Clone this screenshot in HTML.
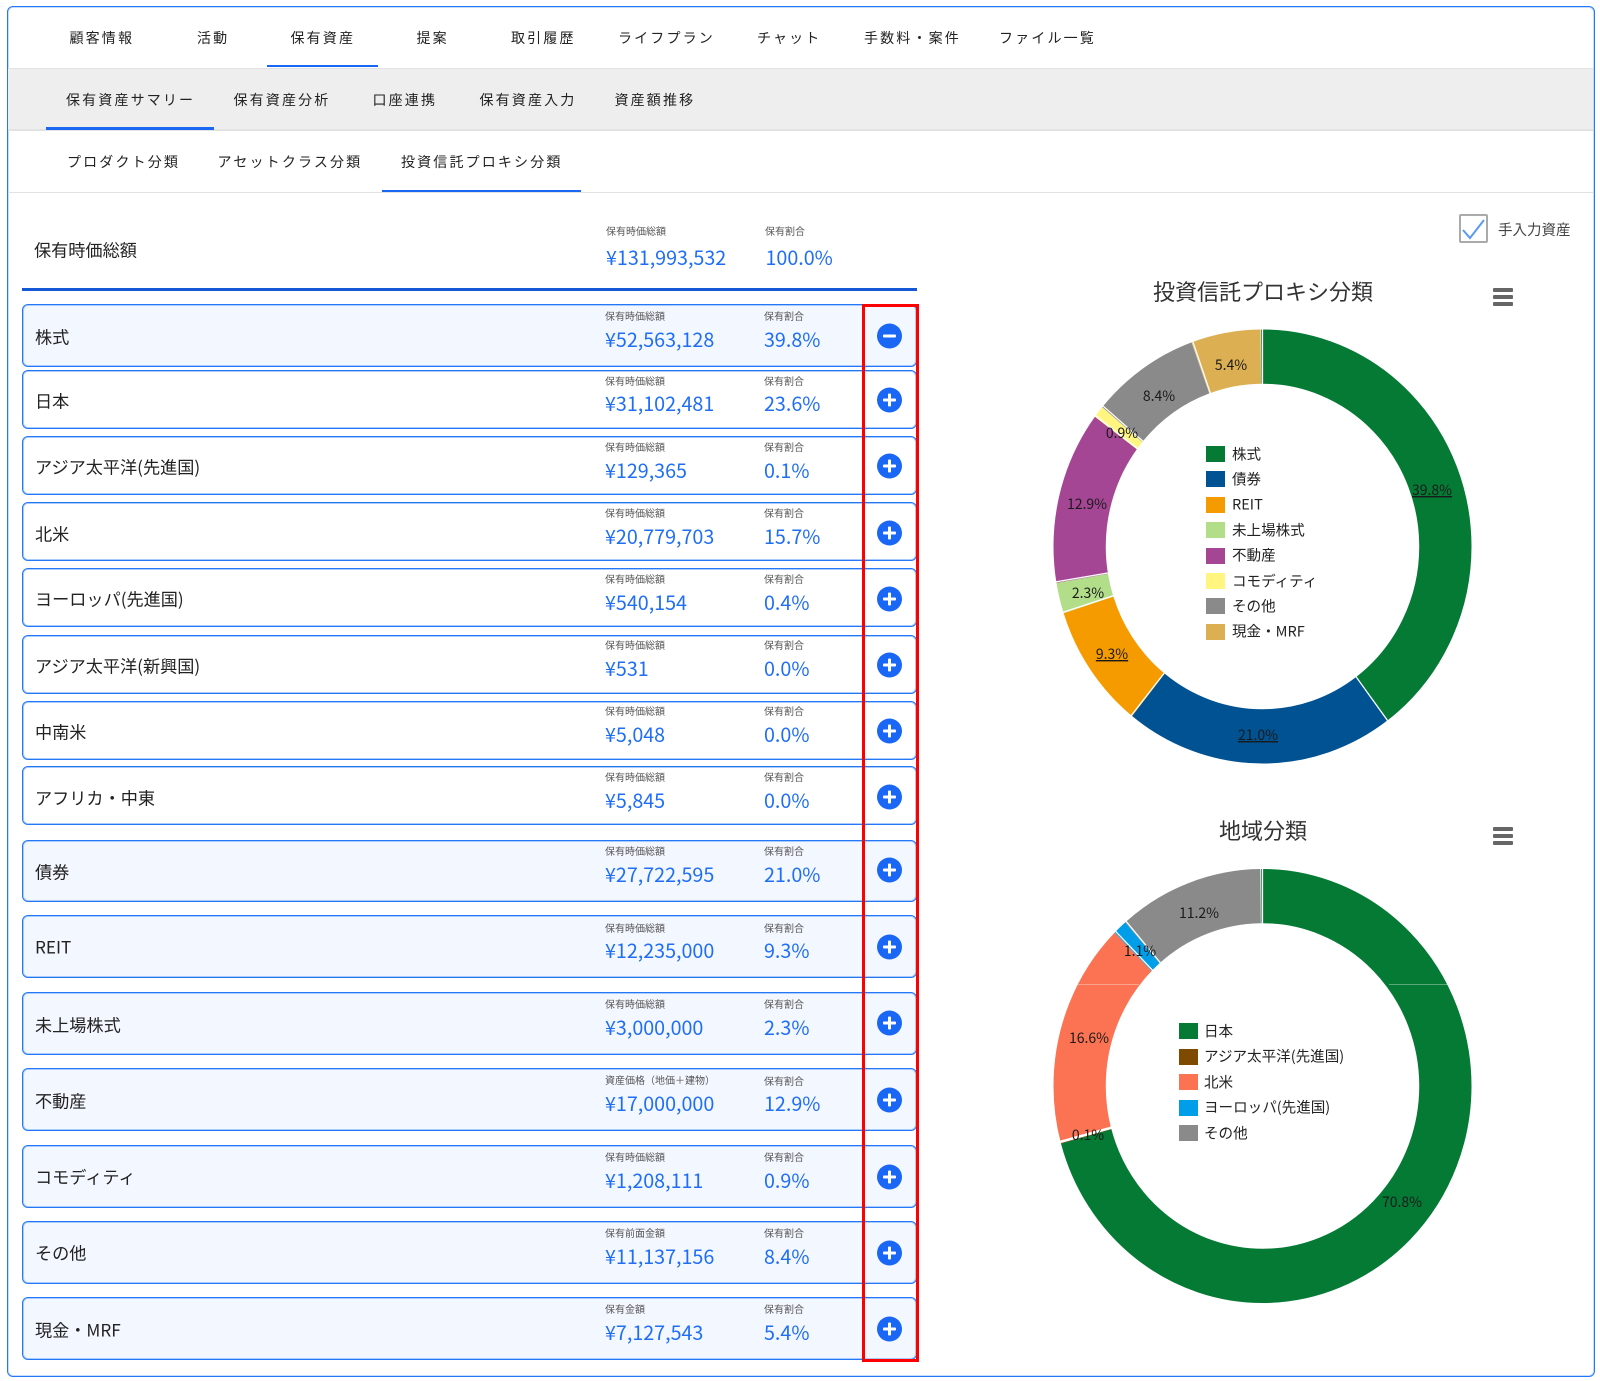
<!DOCTYPE html>
<html lang="ja"><head><meta charset="utf-8"><title>保有資産</title>
<style>
html,body{margin:0;padding:0;background:#fff}
body{width:1600px;height:1381px;position:relative;overflow:hidden;color:#333}
body,svg text{font-family:"Noto Sans CJK JP","Liberation Sans",sans-serif}
.t{position:absolute;white-space:nowrap;line-height:1;transform:translateY(-50%)}
.n{font-size:14px;letter-spacing:2.15px;color:#222}
.l{font-size:17.15px;color:#222}
.s{font-size:10px;color:#555}
.v{font-size:19.7px;color:#1f6ef5}
.b{position:absolute;box-sizing:border-box}
.r{position:absolute;left:22px;width:895px;box-sizing:border-box;border:1px solid #2278f8;box-shadow:inset 0 0 0 1px #a9cbfb;border-radius:6px;background:#f3f7ff}
.w{background:#fff}
.i{position:absolute;left:877px;width:25px;height:25px;border-radius:50%;background:#1a66f5;transform:translateY(-50%)}
.i::before{content:"";position:absolute;left:6px;top:11px;width:13px;height:3px;background:#fff;border-radius:1px}
.i::after{content:"";position:absolute;left:11px;top:6px;width:3px;height:13px;background:#fff;border-radius:1px}
.m::after{display:none}
.sw{position:absolute;width:19px;height:16px}
.g{font-size:14.55px;color:#222}
.h{position:absolute;left:1493px;width:20px;height:3.5px;background:#666;border-radius:1px}
</style></head><body>

<div class="b" style="left:7px;top:6px;width:1588px;height:1371px;border:1px solid #2278f8;box-shadow:inset 0 0 0 1px #c4dbfc;border-radius:6px"></div>

<div class="b" style="left:8px;top:68px;width:1585px;height:63px;background:#eee;border-top:1px solid #e2e2e2;border-bottom:2px solid #e2e2e2"></div>
<div class="b" style="left:8px;top:192px;width:1585px;height:1px;background:#e2e2e2"></div>

<div class="b" style="left:267px;top:64.5px;width:111px;height:2.5px;background:#1a66f5"></div>
<div class="b" style="left:46px;top:127px;width:168px;height:2.5px;background:#1a66f5"></div>
<div class="b" style="left:382px;top:189.5px;width:199px;height:2.5px;background:#1a66f5"></div>

<span class="t n" style="left:69.5px;top:38px">顧客情報</span>
<span class="t n" style="left:197px;top:38px">活動</span>
<span class="t n" style="left:290.5px;top:38px">保有資産</span>
<span class="t n" style="left:416.5px;top:38px">提案</span>
<span class="t n" style="left:511px;top:38px">取引履歴</span>
<span class="t n" style="left:618px;top:38px">ライフプラン</span>
<span class="t n" style="left:757px;top:38px">チャット</span>
<span class="t n" style="left:864px;top:38px">手数料・案件</span>
<span class="t n" style="left:999px;top:38px">ファイル一覧</span>

<span class="t n" style="left:66px;top:100px">保有資産サマリー</span>
<span class="t n" style="left:233.5px;top:100px">保有資産分析</span>
<span class="t n" style="left:372.5px;top:100px">口座連携</span>
<span class="t n" style="left:479.5px;top:100px">保有資産入力</span>
<span class="t n" style="left:614.5px;top:100px">資産額推移</span>

<span class="t n" style="left:67px;top:162px">プロダクト分類</span>
<span class="t n" style="left:217.5px;top:162px">アセットクラス分類</span>
<span class="t n" style="left:401px;top:162px">投資信託プロキシ分類</span>

<span class="t l" style="left:34px;top:249px">保有時価総額</span>
<span class="t s" style="left:606px;top:231px">保有時価総額</span>
<span class="t s" style="left:765px;top:231px">保有割合</span>
<span class="t v" style="left:606px;top:256.5px">¥131,993,532</span>
<span class="t v" style="left:765.5px;top:256.5px">100.0%</span>
<div class="b" style="left:22px;top:288px;width:895px;height:2.5px;background:#1558d6"></div>

<div class="r" style="top:304px;height:63px"></div>
<div class="r w" style="top:370px;height:59px"></div>
<div class="r w" style="top:436px;height:59px"></div>
<div class="r w" style="top:502px;height:59px"></div>
<div class="r w" style="top:568px;height:59px"></div>
<div class="r w" style="top:635px;height:59px"></div>
<div class="r w" style="top:701px;height:59px"></div>
<div class="r w" style="top:766px;height:59px"></div>
<div class="r" style="top:840px;height:62px"></div>
<div class="r" style="top:915px;height:63px"></div>
<div class="r" style="top:992px;height:63px"></div>
<div class="r" style="top:1068px;height:63px"></div>
<div class="r" style="top:1145px;height:63px"></div>
<div class="r" style="top:1221px;height:63px"></div>
<div class="r" style="top:1297px;height:63px"></div>

<span class="t l" style="left:35px;top:336px">株式</span><span class="t s" style="left:605px;top:316px">保有時価総額</span><span class="t s" style="left:764px;top:316px">保有割合</span><span class="t v" style="left:605px;top:339px">¥52,563,128</span><span class="t v" style="left:764px;top:339px">39.8%</span><div class="i m" style="top:336px"></div>
<span class="t l" style="left:35px;top:400px">日本</span><span class="t s" style="left:605px;top:381px">保有時価総額</span><span class="t s" style="left:764px;top:381px">保有割合</span><span class="t v" style="left:605px;top:403px">¥31,102,481</span><span class="t v" style="left:764px;top:403px">23.6%</span><div class="i" style="top:400px"></div>
<span class="t l" style="left:35px;top:466px">アジア太平洋(先進国)</span><span class="t s" style="left:605px;top:447px">保有時価総額</span><span class="t s" style="left:764px;top:447px">保有割合</span><span class="t v" style="left:605px;top:469.5px">¥129,365</span><span class="t v" style="left:764px;top:469.5px">0.1%</span><div class="i" style="top:466px"></div>
<span class="t l" style="left:35px;top:533px">北米</span><span class="t s" style="left:605px;top:513px">保有時価総額</span><span class="t s" style="left:764px;top:513px">保有割合</span><span class="t v" style="left:605px;top:536px">¥20,779,703</span><span class="t v" style="left:764px;top:536px">15.7%</span><div class="i" style="top:532.5px"></div>
<span class="t l" style="left:35px;top:598px">ヨーロッパ(先進国)</span><span class="t s" style="left:605px;top:579px">保有時価総額</span><span class="t s" style="left:764px;top:579px">保有割合</span><span class="t v" style="left:605px;top:602px">¥540,154</span><span class="t v" style="left:764px;top:602px">0.4%</span><div class="i" style="top:599px"></div>
<span class="t l" style="left:35px;top:664.5px">アジア太平洋(新興国)</span><span class="t s" style="left:605px;top:645px">保有時価総額</span><span class="t s" style="left:764px;top:645px">保有割合</span><span class="t v" style="left:605px;top:668px">¥531</span><span class="t v" style="left:764px;top:668px">0.0%</span><div class="i" style="top:664.5px"></div>
<span class="t l" style="left:35px;top:731px">中南米</span><span class="t s" style="left:605px;top:711px">保有時価総額</span><span class="t s" style="left:764px;top:711px">保有割合</span><span class="t v" style="left:605px;top:734px">¥5,048</span><span class="t v" style="left:764px;top:734px">0.0%</span><div class="i" style="top:731px"></div>
<span class="t l" style="left:35px;top:797px">アフリカ・中東</span><span class="t s" style="left:605px;top:777px">保有時価総額</span><span class="t s" style="left:764px;top:777px">保有割合</span><span class="t v" style="left:605px;top:800px">¥5,845</span><span class="t v" style="left:764px;top:800px">0.0%</span><div class="i" style="top:797px"></div>
<span class="t l" style="left:35px;top:870.5px">債券</span><span class="t s" style="left:605px;top:851px">保有時価総額</span><span class="t s" style="left:764px;top:851px">保有割合</span><span class="t v" style="left:605px;top:874px">¥27,722,595</span><span class="t v" style="left:764px;top:874px">21.0%</span><div class="i" style="top:870px"></div>
<span class="t l" style="left:35px;top:946px">REIT</span><span class="t s" style="left:605px;top:928px">保有時価総額</span><span class="t s" style="left:764px;top:928px">保有割合</span><span class="t v" style="left:605px;top:950px">¥12,235,000</span><span class="t v" style="left:764px;top:950px">9.3%</span><div class="i" style="top:947px"></div>
<span class="t l" style="left:35px;top:1024px">未上場株式</span><span class="t s" style="left:605px;top:1004px">保有時価総額</span><span class="t s" style="left:764px;top:1004px">保有割合</span><span class="t v" style="left:605px;top:1027px">¥3,000,000</span><span class="t v" style="left:764px;top:1027px">2.3%</span><div class="i" style="top:1023px"></div>
<span class="t l" style="left:35px;top:1100px">不動産</span><span class="t s" style="left:605px;top:1080px">資産価格（地価＋建物）</span><span class="t s" style="left:764px;top:1081px">保有割合</span><span class="t v" style="left:605px;top:1103px">¥17,000,000</span><span class="t v" style="left:764px;top:1103px">12.9%</span><div class="i" style="top:1100px"></div>
<span class="t l" style="left:35px;top:1176px">コモディティ</span><span class="t s" style="left:605px;top:1157px">保有時価総額</span><span class="t s" style="left:764px;top:1157px">保有割合</span><span class="t v" style="left:605px;top:1180px">¥1,208,111</span><span class="t v" style="left:764px;top:1180px">0.9%</span><div class="i" style="top:1176.5px"></div>
<span class="t l" style="left:35px;top:1252px">その他</span><span class="t s" style="left:605px;top:1233px">保有前面金額</span><span class="t s" style="left:764px;top:1233px">保有割合</span><span class="t v" style="left:605px;top:1256px">¥11,137,156</span><span class="t v" style="left:764px;top:1256px">8.4%</span><div class="i" style="top:1253px"></div>
<span class="t l" style="left:35px;top:1329px">現金・MRF</span><span class="t s" style="left:605px;top:1309px">保有金額</span><span class="t s" style="left:764px;top:1309px">保有割合</span><span class="t v" style="left:605px;top:1332px">¥7,127,543</span><span class="t v" style="left:764px;top:1332px">5.4%</span><div class="i" style="top:1329px"></div>

<div class="b" style="left:862px;top:304px;width:57px;height:1058px;border:3px solid #f00"></div>

<div class="b" style="left:1459px;top:214px;width:29px;height:29px;border:2px solid #aaa;border-radius:2px"></div>
<svg style="position:absolute;left:1459px;top:214px" width="29" height="29" viewBox="0 0 29 29"><path d="M4 16 L11 24 L25 6" fill="none" stroke="#5a9af5" stroke-width="2"/></svg>
<span class="t" style="left:1498px;top:230px;font-size:14.5px;color:#444">手入力資産</span>

<span class="t" style="left:1153px;top:291px;font-size:22px;color:#333">投資信託プロキシ分類</span>
<span class="t" style="left:1219px;top:830px;font-size:22px;color:#333">地域分類</span>
<div class="h" style="top:288px"></div><div class="h" style="top:295px"></div><div class="h" style="top:302px"></div>
<div class="h" style="top:827px"></div><div class="h" style="top:834px"></div><div class="h" style="top:841px"></div>

<svg style="position:absolute;left:0;top:0" width="1600" height="1381" viewBox="0 0 1600 1381">
<g transform="translate(1262.5,546.5) scale(2.09,2.17)" fill="none" stroke-width="25">
<g transform="rotate(-90)">
<circle r="87.5" pathLength="100" stroke="#dcb052" stroke-dasharray="5.35 94.65" stroke-dashoffset="-94.62"/>
<circle r="87.5" pathLength="100" stroke="#047a35" stroke-dasharray="39.8 60.2" stroke-dashoffset="-0.01"/>
<circle r="87.5" pathLength="100" stroke="#005292" stroke-dasharray="21 79" stroke-dashoffset="-39.8"/>
<circle r="87.5" pathLength="100" stroke="#f59b00" stroke-dasharray="9.3 90.7" stroke-dashoffset="-60.8"/>
<circle r="87.5" pathLength="100" stroke="#b2de8a" stroke-dasharray="2.3 97.7" stroke-dashoffset="-70.1"/>
<circle r="87.5" pathLength="100" stroke="#a44694" stroke-dasharray="12.9 87.1" stroke-dashoffset="-72.4"/>
<circle r="87.5" pathLength="100" stroke="#fff57f" stroke-dasharray="0.9 99.1" stroke-dashoffset="-85.3"/>
<circle r="87.5" pathLength="100" stroke="#8a8a8a" stroke-dasharray="8.4 91.6" stroke-dashoffset="-86.2"/>
</g>
<g stroke="#fff" stroke-width=".6">
<line y1="-74" y2="-101"/>
<line y1="-74" y2="-101" transform="rotate(143.28)"/>
<line y1="-74" y2="-101" transform="rotate(218.88)"/>
<line y1="-74" y2="-101" transform="rotate(252.36)"/>
<line y1="-74" y2="-101" transform="rotate(260.64)"/>
<line y1="-74" y2="-101" transform="rotate(307.08)"/>
<line y1="-74" y2="-101" transform="rotate(310.32)"/>
<line y1="-74" y2="-101" transform="rotate(340.56)"/>
</g>
</g>
<g transform="translate(1262.5,1086) scale(2.09,2.17)" fill="none" stroke-width="25">
<g transform="rotate(-90)">
<circle r="87.5" pathLength="100" stroke="#8a8a8a" stroke-dasharray="11.25 88.75" stroke-dashoffset="-88.7"/>
<circle r="87.5" pathLength="100" stroke="#047a35" stroke-dasharray="70.8 29.2" stroke-dashoffset="-0.01"/>
<circle r="87.5" pathLength="100" stroke="#7d4a00" stroke-dasharray="0.1 99.9" stroke-dashoffset="-70.8"/>
<circle r="87.5" pathLength="100" stroke="#fb7352" stroke-dasharray="16.7 83.3" stroke-dashoffset="-70.9"/>
<circle r="87.5" pathLength="100" stroke="#009ee8" stroke-dasharray="1.1 98.9" stroke-dashoffset="-87.6"/>
</g>
<g stroke="#fff" stroke-width=".6">
<line y1="-74" y2="-101"/>
<line y1="-74" y2="-101" transform="rotate(255.1)" stroke-width="1.2"/>
<line y1="-74" y2="-101" transform="rotate(315.4)"/>
<line y1="-74" y2="-101" transform="rotate(319.3)"/>
</g>
</g>
<g stroke="#fff" stroke-opacity=".35" stroke-width="1">
<line x1="1078" y1="984.5" x2="1139" y2="984.5"/>
<line x1="1389" y1="984.5" x2="1450" y2="984.5"/>
</g>
<g font-size="14" fill="#1a1a1a" text-anchor="middle">
<text x="1432" y="495" text-decoration="underline">39.8%</text>
<text x="1258" y="740" text-decoration="underline">21.0%</text>
<text x="1112" y="659" text-decoration="underline">9.3%</text>
<text x="1088" y="598">2.3%</text>
<text x="1087" y="509">12.9%</text>
<text x="1122" y="438">0.9%</text>
<text x="1159" y="401">8.4%</text>
<text x="1231" y="370">5.4%</text>
<text x="1402" y="1207">70.8%</text>
<text x="1088" y="1140">0.1%</text>
<text x="1089" y="1043">16.6%</text>
<text x="1140" y="956">1.1%</text>
<text x="1199" y="918">11.2%</text>
</g>
</svg>

<div class="sw" style="left:1206px;top:446px;background:#047a35"></div><span class="t g" style="left:1232px;top:454.5px">株式</span>
<div class="sw" style="left:1206px;top:471px;background:#005292"></div><span class="t g" style="left:1232px;top:480px">債券</span>
<div class="sw" style="left:1206px;top:497px;background:#f59b00"></div><span class="t g" style="left:1232px;top:505px">REIT</span>
<div class="sw" style="left:1206px;top:522px;background:#b2de8a"></div><span class="t g" style="left:1232px;top:531px">未上場株式</span>
<div class="sw" style="left:1206px;top:548px;background:#a44694"></div><span class="t g" style="left:1232px;top:556px">不動産</span>
<div class="sw" style="left:1206px;top:573px;background:#fff57f"></div><span class="t g" style="left:1232px;top:582px">コモディティ</span>
<div class="sw" style="left:1206px;top:598px;background:#8a8a8a"></div><span class="t g" style="left:1232px;top:607px">その他</span>
<div class="sw" style="left:1206px;top:624px;background:#dcb052"></div><span class="t g" style="left:1232px;top:632px">現金・MRF</span>

<div class="sw" style="left:1179px;top:1023px;background:#047a35"></div><span class="t g" style="left:1204px;top:1031.5px">日本</span>
<div class="sw" style="left:1179px;top:1049px;background:#7d4a00"></div><span class="t g" style="left:1204px;top:1057px">アジア太平洋(先進国)</span>
<div class="sw" style="left:1179px;top:1074px;background:#fb7352"></div><span class="t g" style="left:1204px;top:1082.5px">北米</span>
<div class="sw" style="left:1179px;top:1100px;background:#009ee8"></div><span class="t g" style="left:1204px;top:1108px">ヨーロッパ(先進国)</span>
<div class="sw" style="left:1179px;top:1125px;background:#8a8a8a"></div><span class="t g" style="left:1204px;top:1133.5px">その他</span>

</body></html>
